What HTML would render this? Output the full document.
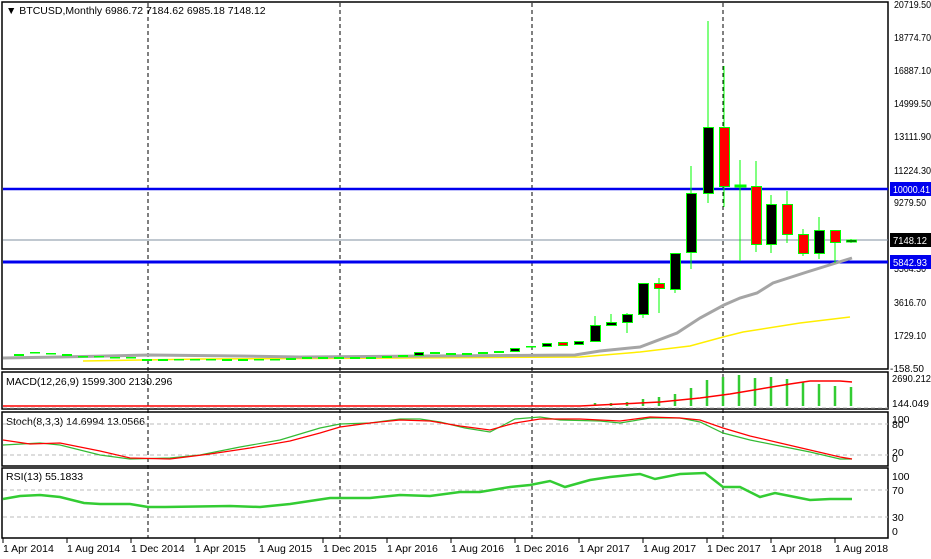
<!DOCTYPE html>
<html><head><meta charset="utf-8"><style>
body{margin:0;background:#fff;width:931px;height:559px;overflow:hidden}
svg{display:block}
text{font-family:"Liberation Sans",sans-serif;font-size:10.5px;fill:#000}
.ax{font-size:10.5px}
</style></head><body>
<svg width="931" height="559" xmlns="http://www.w3.org/2000/svg">
<rect width="931" height="559" fill="#fff"/>
<g stroke="#000" stroke-width="1.5" fill="none">
<rect x="2" y="2" width="886" height="367"/>
<rect x="2" y="372" width="886" height="37"/>
<rect x="2" y="412" width="886" height="54"/>
<rect x="2" y="468" width="886" height="70"/>
</g>
<g stroke="#000" stroke-dasharray="4,3" stroke-width="1">
<line x1="148" y1="3" x2="148" y2="538"/><line x1="340" y1="3" x2="340" y2="538"/>
<line x1="532" y1="3" x2="532" y2="538"/><line x1="723" y1="3" x2="723" y2="538"/>
</g>
<line x1="3" y1="240" x2="888" y2="240" stroke="#8090a0" stroke-width="1"/>
<line x1="3" y1="189" x2="888" y2="189" stroke="#0000ee" stroke-width="2.5"/>
<line x1="3" y1="262" x2="888" y2="262" stroke="#0000ee" stroke-width="3"/>
<polyline fill="none" stroke="#ffee00" stroke-width="1.5" points="83,361 200,359 400,358 580,357 640,352 690,346 723,337 743,332 800,323 850,317"/>
<polyline fill="none" stroke="#a5a5a5" stroke-width="3" points="3,358 60,357 150,355 240,356 300,357 430,356 575,355 600,351 640,347 677,333 700,318 724,305 740,298 757,293 773,283 807,272 852,258"/>
<g fill="#00ff00">
<rect x="14" y="354" width="10" height="2" /><rect x="30" y="352" width="10" height="1.5"/><rect x="46" y="353" width="10" height="1.5"/>
<rect x="62" y="354" width="10" height="2"/><rect x="78" y="356" width="10" height="1.5"/><rect x="94" y="356" width="10" height="1.5"/>
<rect x="110" y="357" width="10" height="1.5"/><rect x="126" y="357" width="10" height="1.5"/><rect x="142" y="359" width="10" height="2"/>
<rect x="158" y="359" width="10" height="2"/><rect x="174" y="359" width="10" height="1.5"/><rect x="190" y="359" width="10" height="1.5"/>
<rect x="206" y="359" width="10" height="1.5"/><rect x="222" y="359" width="10" height="2"/><rect x="238" y="359" width="10" height="2"/>
<rect x="254" y="359" width="10" height="1.5"/><rect x="270" y="359" width="10" height="1.5"/><rect x="286" y="358" width="10" height="2"/>
<rect x="302" y="357" width="10" height="2"/><rect x="318" y="357" width="10" height="2"/><rect x="334" y="357" width="10" height="2"/>
<rect x="350" y="357" width="10" height="2"/><rect x="366" y="357" width="10" height="2"/><rect x="382" y="356" width="10" height="2"/>
<rect x="398" y="355" width="10" height="2"/><rect x="430" y="352" width="10" height="2"/>
<rect x="446" y="353" width="10" height="2"/><rect x="462" y="353" width="10" height="2"/><rect x="478" y="352" width="10" height="2"/>
<rect x="494" y="351" width="10" height="2"/><rect x="526" y="346" width="10" height="1.5"/>
</g>
<g stroke="#00ff00" stroke-width="1">
<rect x="414.5" y="352.5" width="9" height="3" fill="#000"/>
<rect x="510.5" y="348.5" width="9" height="3" fill="#000"/>
<rect x="542.5" y="343.5" width="9" height="3" fill="#000"/>
<rect x="558.5" y="342.5" width="9" height="3" fill="#f00"/>
<rect x="574.5" y="341.5" width="9" height="3" fill="#000"/>
<line x1="595" y1="316" x2="595" y2="341"/><rect x="590.5" y="325.5" width="10" height="16" fill="#000"/>
<line x1="611" y1="314" x2="611" y2="325"/><rect x="606.5" y="322.5" width="10" height="3" fill="#000"/>
<line x1="627" y1="313" x2="627" y2="333"/><rect x="622.5" y="314.5" width="10" height="8" fill="#000"/>
<line x1="643" y1="283" x2="643" y2="318"/><rect x="638.5" y="283.5" width="10" height="31" fill="#000"/>
<line x1="659" y1="278" x2="659" y2="313"/><rect x="654.5" y="283.5" width="10" height="5" fill="#f00"/>
<line x1="675" y1="253" x2="675" y2="293"/><rect x="670.5" y="253.5" width="10" height="36" fill="#000"/>
<line x1="691" y1="166" x2="691" y2="269"/><rect x="686.5" y="193.5" width="10" height="59" fill="#000"/>
<line x1="708" y1="21" x2="708" y2="203"/><rect x="703.5" y="127.5" width="10" height="66" fill="#000"/>
<line x1="724" y1="66" x2="724" y2="207"/><rect x="719.5" y="127.5" width="10" height="59" fill="#f00"/>
<line x1="740" y1="160" x2="740" y2="261"/><rect x="735" y="185" width="11" height="2" fill="#0f0"/>
<line x1="756" y1="161" x2="756" y2="252"/><rect x="751.5" y="186.5" width="10" height="58" fill="#f00"/>
<line x1="771" y1="195" x2="771" y2="253"/><rect x="766.5" y="204.5" width="10" height="40" fill="#000"/>
<line x1="787" y1="191" x2="787" y2="243"/><rect x="782.5" y="204.5" width="10" height="30" fill="#f00"/>
<line x1="803" y1="229" x2="803" y2="256"/><rect x="798.5" y="234.5" width="10" height="19" fill="#f00"/>
<line x1="819" y1="217" x2="819" y2="259"/><rect x="814.5" y="230.5" width="10" height="23" fill="#000"/>
<line x1="835" y1="242" x2="835" y2="263"/><rect x="830.5" y="230.5" width="10" height="12" fill="#f00"/>
<line x1="851" y1="239" x2="851" y2="243"/><rect x="846.5" y="240" width="10" height="2" fill="#000"/>
</g>
<text x="6" y="14" font-size="10">▼ BTCUSD,Monthly  6986.72 7184.62 6985.18 7148.12</text>
<g lengthAdjust="spacingAndGlyphs">
<text x="894" y="8" textLength="37" lengthAdjust="spacingAndGlyphs">20719.50</text>
<text x="894" y="41" textLength="37" lengthAdjust="spacingAndGlyphs">18774.70</text>
<text x="894" y="74" textLength="37" lengthAdjust="spacingAndGlyphs">16887.10</text>
<text x="894" y="107" textLength="37" lengthAdjust="spacingAndGlyphs">14999.50</text>
<text x="894" y="140" textLength="37" lengthAdjust="spacingAndGlyphs">13111.90</text>
<text x="894" y="174" textLength="37" lengthAdjust="spacingAndGlyphs">11224.30</text>
<text x="894" y="206" textLength="32" lengthAdjust="spacingAndGlyphs">9279.50</text>
<text x="894" y="272" textLength="32" lengthAdjust="spacingAndGlyphs">5504.30</text>
<text x="894" y="306" textLength="32" lengthAdjust="spacingAndGlyphs">3616.70</text>
<text x="894" y="339" textLength="32" lengthAdjust="spacingAndGlyphs">1729.10</text>
<text x="890" y="372" textLength="34" lengthAdjust="spacingAndGlyphs">-158.50</text>
</g>
<rect x="890" y="182" width="41" height="14" fill="#0000ee"/><text x="893" y="193" textLength="37" lengthAdjust="spacingAndGlyphs" style="fill:#fff">10000.41</text>
<rect x="890" y="233" width="41" height="14" fill="#000"/><text x="893" y="244" textLength="34" lengthAdjust="spacingAndGlyphs" style="fill:#fff">7148.12</text>
<rect x="890" y="255" width="41" height="14" fill="#0000ee"/><text x="893" y="266" textLength="34" lengthAdjust="spacingAndGlyphs" style="fill:#fff">5842.93</text>
<text x="6" y="385">MACD(12,26,9) 1599.300 2130.296</text>
<line x1="3" y1="408" x2="888" y2="408" stroke="#bbb" stroke-dasharray="4,3"/>
<g stroke="#33cc33" stroke-width="2.5">
<line x1="595" y1="406" x2="595" y2="403"/><line x1="611" y1="406" x2="611" y2="403"/><line x1="627" y1="406" x2="627" y2="402"/>
<line x1="643" y1="406" x2="643" y2="399"/><line x1="659" y1="406" x2="659" y2="397"/><line x1="675" y1="406" x2="675" y2="394"/>
<line x1="691" y1="406" x2="691" y2="388"/><line x1="707" y1="406" x2="707" y2="380"/><line x1="723" y1="406" x2="723" y2="377"/>
<line x1="739" y1="406" x2="739" y2="375"/><line x1="755" y1="406" x2="755" y2="378"/><line x1="771" y1="406" x2="771" y2="377"/>
<line x1="787" y1="406" x2="787" y2="379"/><line x1="803" y1="406" x2="803" y2="382"/><line x1="819" y1="406" x2="819" y2="384"/>
<line x1="835" y1="406" x2="835" y2="386"/><line x1="851" y1="406" x2="851" y2="387"/>
</g>
<polyline fill="none" stroke="#f00" stroke-width="1.5" points="3,406 580,406 620,404 660,402 700,398 730,394 760,389 790,384 810,381 840,381 852,382"/>
<text x="892" y="382" textLength="39" lengthAdjust="spacingAndGlyphs">2690.212</text>
<text x="892" y="407" textLength="37" lengthAdjust="spacingAndGlyphs">144.049</text>
<text x="6" y="425">Stoch(8,3,3) 14.6994 13.0566</text>
<line x1="3" y1="424" x2="888" y2="424" stroke="#bbb" stroke-dasharray="4,3"/>
<line x1="3" y1="455" x2="888" y2="455" stroke="#bbb" stroke-dasharray="4,3"/>
<polyline fill="none" stroke="#33bb33" stroke-width="1.2" points="3,445 40,443 60,445 100,455 130,459 170,458 200,455 240,447 280,440 320,428 340,424 370,423 400,419 420,419 440,422 465,428 490,432 515,419 540,417 560,420 600,421 620,423 650,418 680,418 700,422 723,433 750,440 780,446 810,452 840,459 852,459"/>
<polyline fill="none" stroke="#f00" stroke-width="1.2" points="3,440 30,444 60,443 100,451 130,458 170,459 210,454 250,448 290,441 320,433 340,427 370,423 400,420 430,421 460,426 490,430 515,423 540,419 580,419 620,421 650,417 680,418 700,420 723,428 750,436 780,443 810,450 840,457 852,459"/>
<text x="892" y="423">100</text><text x="892" y="428">80</text><text x="892" y="456">20</text><text x="892" y="462">0</text>
<text x="6" y="480">RSI(13) 55.1833</text>
<line x1="3" y1="490" x2="888" y2="490" stroke="#bbb" stroke-dasharray="4,3"/>
<line x1="3" y1="517" x2="888" y2="517" stroke="#bbb" stroke-dasharray="4,3"/>
<polyline fill="none" stroke="#33cc33" stroke-width="2.5" points="3,499 20,496 40,495 60,497 84,503 100,504 130,504 148,507 165,507 230,506 260,507 290,504 310,501 330,498 370,498 400,495 430,496 460,492 480,492 510,487 530,485 550,481 565,487 590,480 610,477 640,474 655,479 680,474 705,473 723,487 740,487 760,497 775,493 790,496 810,500 830,499 852,499"/>
<text x="892" y="480">100</text><text x="892" y="494">70</text><text x="892" y="521">30</text><text x="892" y="535">0</text>
<g stroke="#000"><line x1="3" y1="538" x2="3" y2="543"/><line x1="67" y1="538" x2="67" y2="543"/><line x1="131" y1="538" x2="131" y2="543"/><line x1="195" y1="538" x2="195" y2="543"/><line x1="259" y1="538" x2="259" y2="543"/><line x1="323" y1="538" x2="323" y2="543"/><line x1="387" y1="538" x2="387" y2="543"/><line x1="451" y1="538" x2="451" y2="543"/><line x1="515" y1="538" x2="515" y2="543"/><line x1="579" y1="538" x2="579" y2="543"/><line x1="643" y1="538" x2="643" y2="543"/><line x1="707" y1="538" x2="707" y2="543"/><line x1="771" y1="538" x2="771" y2="543"/><line x1="835" y1="538" x2="835" y2="543"/></g>
<g>
<text x="3" y="552">1 Apr 2014</text><text x="67" y="552">1 Aug 2014</text><text x="131" y="552">1 Dec 2014</text>
<text x="195" y="552">1 Apr 2015</text><text x="259" y="552">1 Aug 2015</text><text x="323" y="552">1 Dec 2015</text>
<text x="387" y="552">1 Apr 2016</text><text x="451" y="552">1 Aug 2016</text><text x="515" y="552">1 Dec 2016</text>
<text x="579" y="552">1 Apr 2017</text><text x="643" y="552">1 Aug 2017</text><text x="707" y="552">1 Dec 2017</text>
<text x="771" y="552">1 Apr 2018</text><text x="835" y="552">1 Aug 2018</text>
</g>
</svg>
</body></html>
